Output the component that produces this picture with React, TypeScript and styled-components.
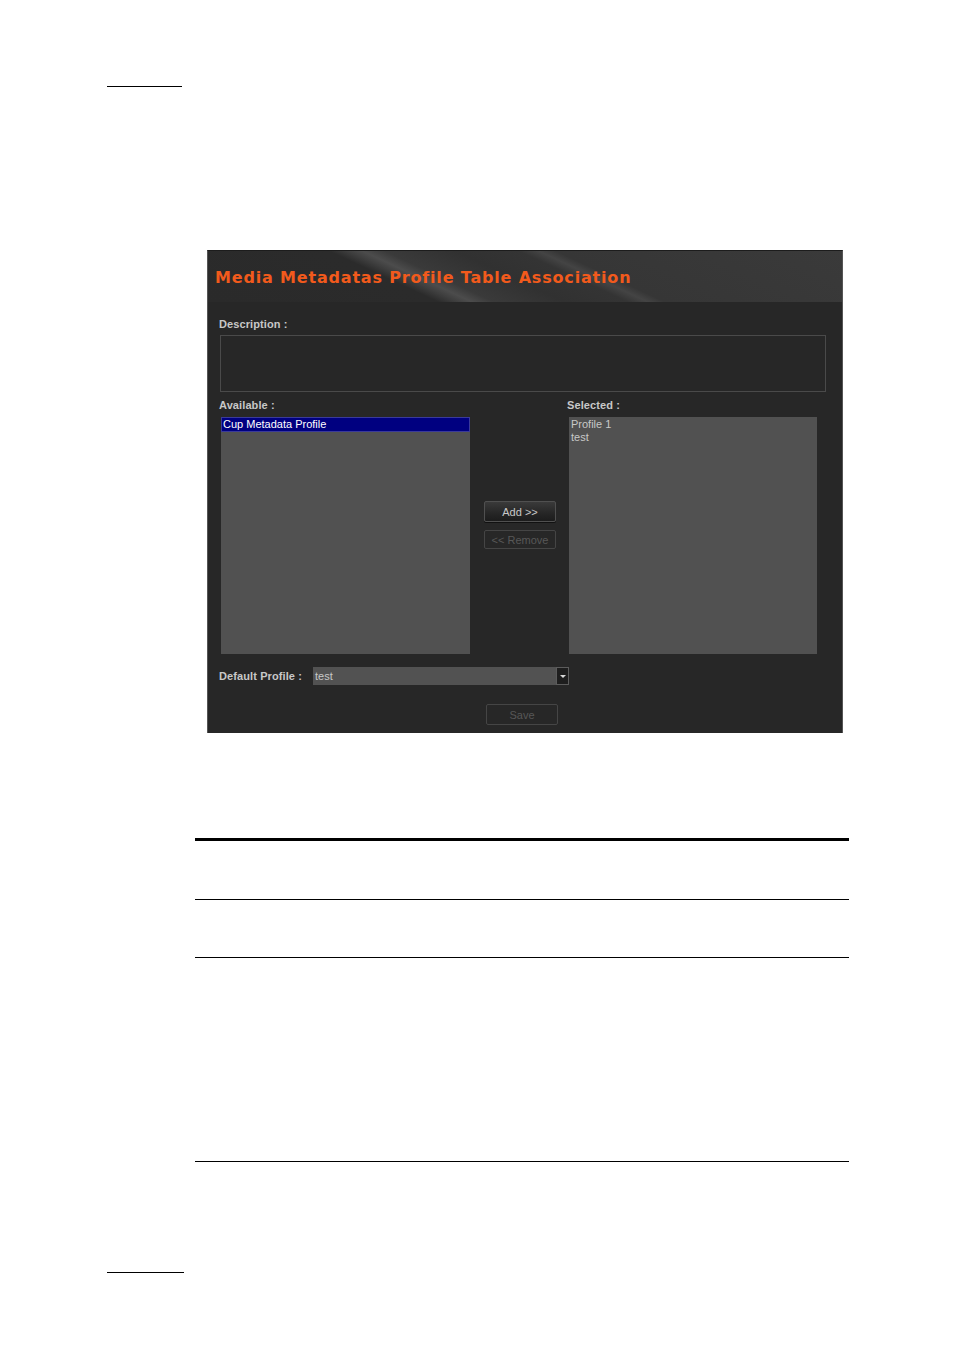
import React from "react";
import styled, { createGlobalStyle } from "styled-components";

const Global = createGlobalStyle`
  html, body { margin: 0; padding: 0; background: #ffffff; }
  body { font-family: "Liberation Sans", Arial, sans-serif; }
`;

const Page = styled.div`
  width: 954px;
  height: 1350px;
  background: #ffffff;
  display: flex;
  flex-direction: column;
  overflow: hidden;
`;

const ShortRule = styled.div<{ $top: number; $left: number; $width: number }>`
  margin-top: ${(p) => p.$top}px;
  margin-left: ${(p) => p.$left}px;
  width: ${(p) => p.$width}px;
  height: 0;
  border-top: 1px solid #000000;
`;

const Dialog = styled.div`
  margin-top: 163px;
  margin-left: 207px;
  width: 636px;
  height: 483px;
  box-sizing: border-box;
  background: #272727;
  border-left: 1px solid #555555;
  border-right: 1px solid #555555;
  border-top: 1px solid #1c1c1c;
  display: flex;
  flex-direction: column;
`;

const Header = styled.div`
  height: 51px;
  flex: none;
  display: flex;
  align-items: center;
  padding-left: 7px;
  background: linear-gradient(
    25deg,
    #2a2a2a 0%,
    #2b2b2b 31%,
    #3e3e3e 33.5%,
    #4c4c4c 35.5%,
    #3a3a3a 38.5%,
    #313131 48%,
    #343434 56.5%,
    #444444 59.2%,
    #363636 61.5%,
    #3a3a3a 100%
  );
`;

const Title = styled.h1`
  margin: 0;
  padding-top: 2px;
  font-family: "DejaVu Sans", Verdana, sans-serif;
  font-weight: bold;
  font-size: 16px;
  letter-spacing: 0.82px;
  color: #f25a1c;
`;

const Body = styled.div`
  display: flex;
  flex-direction: column;
  padding: 15px 0 8px 11px;
`;

const Label = styled.div<{ $col?: number }>`
  height: 14px;
  line-height: 14px;
  grid-column: ${(p) => p.$col ?? "auto"};
  grid-row: ${(p) => (p.$col ? 1 : "auto")};
  font-family: "Liberation Sans", Arial, sans-serif;
  font-weight: bold;
  font-size: 11px;
  letter-spacing: 0.1px;
  color: #c8c8c8;
`;

const DescBox = styled.div`
  margin-top: 4px;
  margin-left: 1px;
  width: 606px;
  height: 57px;
  box-sizing: border-box;
  border: 1px solid #4a4a4a;
  background: #272727;
`;

const ListsGrid = styled.div`
  margin-top: 6px;
  display: grid;
  grid-template-columns: 251px 14px 72px 11px 250px;
  grid-template-rows: 14px 237px;
  row-gap: 5px;
`;

const ListBox = styled.div<{ $col: number }>`
  grid-column: ${(p) => p.$col};
  grid-row: 2;
  margin-left: 2px;
  background: #515151;
  display: flex;
  flex-direction: column;
  padding-top: 1px;
`;

const ListItem = styled.div<{ $selected?: boolean }>`
  height: 13px;
  line-height: 13px;
  margin: 0 1px;
  padding-left: 1px;
  font-family: "Liberation Sans", Arial, sans-serif;
  font-size: 11px;
  white-space: nowrap;
  color: ${(p) => (p.$selected ? "#ffffff" : "#c8c8c8")};
  background: ${(p) => (p.$selected ? "#000080" : "transparent")};
  outline: ${(p) => (p.$selected ? "1px solid #3a3a9a" : "none")};
`;

const ButtonColumn = styled.div`
  grid-column: 3;
  grid-row: 2;
  display: flex;
  flex-direction: column;
  gap: 8px;
  padding-top: 84px;
`;

const Button = styled.div<{ $enabled?: boolean; $h: number }>`
  height: ${(p) => p.$h}px;
  width: 72px;
  box-sizing: border-box;
  border-radius: 2px;
  display: flex;
  align-items: center;
  justify-content: center;
  font-family: "Liberation Sans", Arial, sans-serif;
  font-size: 11px;
  color: ${(p) => (p.$enabled ? "#c8c8c8" : "#575757")};
  border: 1px solid ${(p) => (p.$enabled ? "#505050" : "#454545")};
  background: ${(p) =>
    p.$enabled ? "linear-gradient(#3a3a3a, #262626 60%, #1c1c1c)" : "#272727"};
  box-shadow: ${(p) => (p.$enabled ? "0 1px 0 #111111" : "none")};
`;

const DefaultRow = styled.div`
  margin-top: 13px;
  height: 18px;
  display: flex;
  align-items: center;
`;

const DefaultLabel = styled(Label)`
  width: 94px;
  flex: none;
`;

const SelectField = styled.div`
  width: 243px;
  height: 18px;
  box-sizing: border-box;
  background: #525252;
  padding-left: 2px;
  display: flex;
  align-items: center;
  font-family: "Liberation Sans", Arial, sans-serif;
  font-size: 11px;
  color: #c8c8c8;
`;

const SelectArrow = styled.div`
  width: 13px;
  height: 18px;
  box-sizing: border-box;
  background: #1e1e1e;
  border: 1px solid #5c5c5c;
  display: flex;
  align-items: center;
  justify-content: center;
  &::after {
    content: "";
    width: 0;
    height: 0;
    border-left: 3px solid transparent;
    border-right: 3px solid transparent;
    border-top: 3px solid #d8d8d8;
  }
`;

const SaveRow = styled.div`
  margin-top: 19px;
  margin-left: 267px;
`;

const TableRule = styled.div<{ $top: number; $thick?: boolean }>`
  margin-top: ${(p) => p.$top}px;
  margin-left: 195px;
  width: 654px;
  height: ${(p) => (p.$thick ? 3 : 1)}px;
  background: #000000;
  flex: none;
`;

export default function App() {
  return (
    <>
      <Global />
      <Page>
        <ShortRule $top={86} $left={107} $width={75} />
        <Dialog>
          <Header>
            <Title>Media Metadatas Profile Table Association</Title>
          </Header>
          <Body>
            <Label>Description :</Label>
            <DescBox />
            <ListsGrid>
              <Label $col={1}>Available :</Label>
              <Label $col={5}>Selected :</Label>
              <ListBox $col={1}>
                <ListItem $selected>Cup Metadata Profile</ListItem>
              </ListBox>
              <ButtonColumn>
                <Button $enabled $h={21}>Add &gt;&gt;</Button>
                <Button $h={19}>&lt;&lt; Remove</Button>
              </ButtonColumn>
              <ListBox $col={5}>
                <ListItem>Profile 1</ListItem>
                <ListItem>test</ListItem>
              </ListBox>
            </ListsGrid>
            <DefaultRow>
              <DefaultLabel>Default Profile :</DefaultLabel>
              <SelectField>test</SelectField>
              <SelectArrow />
            </DefaultRow>
            <SaveRow>
              <Button $h={21}>Save</Button>
            </SaveRow>
          </Body>
        </Dialog>
        <TableRule $top={105} $thick />
        <TableRule $top={58} />
        <TableRule $top={57} />
        <TableRule $top={203} />
        <ShortRule $top={110} $left={107} $width={77} />
      </Page>
    </>
  );
}
